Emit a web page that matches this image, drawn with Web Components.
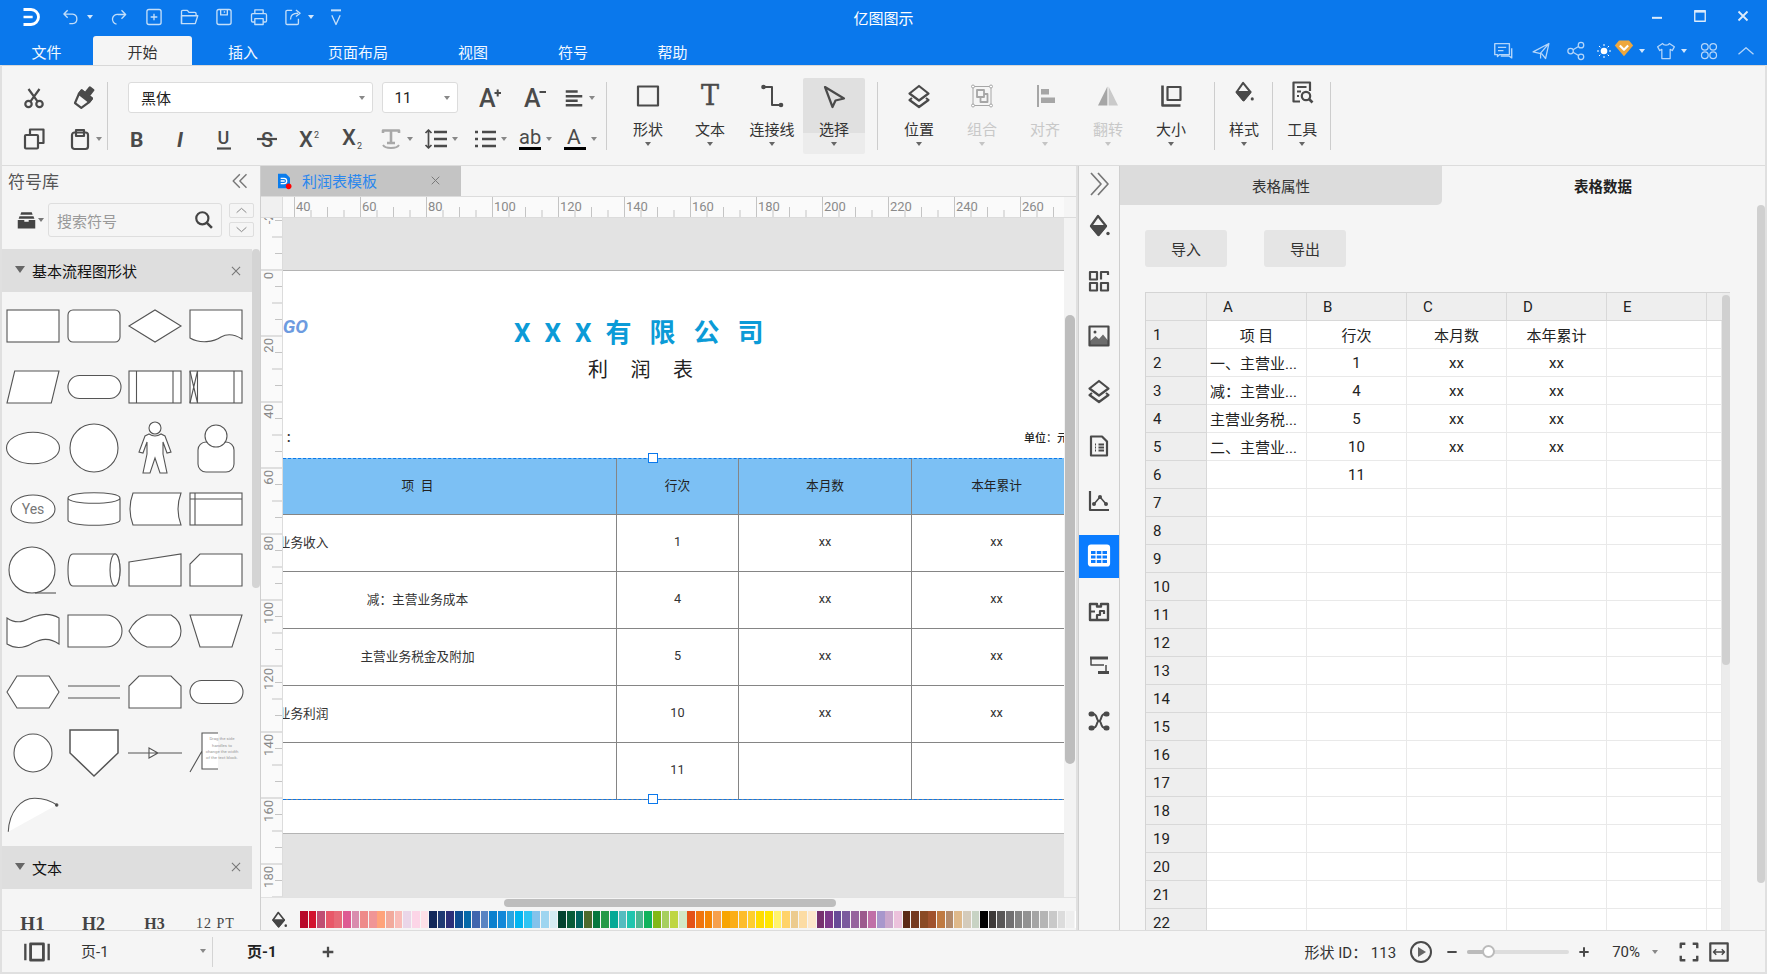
<!DOCTYPE html>
<html lang="zh">
<head>
<meta charset="utf-8">
<title>亿图图示</title>
<style>
html,body{margin:0;height:100%;overflow:hidden;background:#e0e0e0}
body{font-family:Roboto,"Noto Sans CJK SC",sans-serif;font-size:15px;color:#333}
</style>
</head>
<body>
<app-shell></app-shell>
<script>
(function () {
  const T = (s, x, y, size, extra) => `<text x="${x}" y="${y}" font-size="${size}" font-family="Roboto,sans-serif" fill="currentColor" stroke="none" ${extra || ""}>${s}</text>`;
  const ICONS = {
    logo: `<path d="M3 3H12A9 9 0 0 1 12 21H3" stroke-width="3.4"/><path d="M3 12H14" stroke-width="3"/>`,
    undo: `<path d="M8 4 3.5 8.5 8 13M3.5 8.5H14A5.8 5.8 0 0 1 14 20H10"/>`,
    redo: `<path d="M15 4 20 9 15 14M20 9H11A5.8 5.8 0 0 0 9 20.5"/>`,
    "new": `<rect x="3.5" y="3" width="17" height="18" rx="2.5"/><path d="M12 8v8M8 12h8"/>`,
    open: `<path d="M3 20V5.5A1.5 1.5 0 0 1 4.5 4H10l2 2.5h7A1.5 1.5 0 0 1 20.500 8v2"/><path d="M3 20h16.500L22.500 10.500H3z" fill="none"/>`,
    save: `<rect x="3.500" y="3" width="17" height="18" rx="2.500"/><path d="M8 3v6.500h8V3M12.500 5v2"/>`,
    print: `<path d="M7 8V3.500h10V8M7 18H4.500A1.500 1.500 0 0 1 3 16.500v-7A1.500 1.500 0 0 1 4.500 8h15A1.500 1.500 0 0 1 21 9.500v7a1.500 1.500 0 0 1-1.500 1.500H17"/><rect x="7" y="14" width="10" height="7"/>`,
    share: `<path d="M11 4H5a1.500 1.500 0 0 0-1.500 1.500v14A1.500 1.500 0 0 0 5 21h12a1.500 1.500 0 0 0 1.500-1.500V14"/><path d="M9 15c0-5 3-7.500 9-7.500M15.500 3.500l5 4-5 4"/>`,
    custom: `<path d="M6 4h12" stroke-width="2.400"/><path d="M7 10l5 11 5-11"/>`,
    min: `<path d="M6 13h12" stroke-width="2.400"/>`,
    max: `<rect x="5" y="5" width="14" height="14" stroke-width="1.800"/><path d="M5 6h14" stroke-width="3"/>`,
    close: `<path d="M6 6l12 12M18 6 6 18" stroke-width="2.400"/>`,
    comment: `<path d="M3 4h16v12H8l-2 2v-2H3z"/><path d="M6.500 8h9M6.500 11.500h6" stroke-width="1.400"/><path d="M21.500 9v10.500l-3-2H9.500"/>`,
    send: `<path d="M2.500 13 21.500 3 17.500 21 13 15.500 2.500 13zM21.500 3 11.500 14.500V21"/>`,
    nodes: `<circle cx="5.500" cy="12" r="3.300"/><circle cx="18" cy="5" r="3.300"/><circle cx="18" cy="19" r="3.300"/><path d="M8.500 10.500 15 6.500M8.500 13.500l6.500 4"/>`,
    sun: `<circle cx="12" cy="12" r="5" fill="#fff" stroke="none"/><path d="M12 1.500v3M12 19.500v3M1.500 12h3M19.500 12h3M4.500 4.500l2 2M17.500 17.500l2 2M4.500 19.500l2-2M17.500 6.500l2-2" stroke="#fff" stroke-width="1.500"/>`,
    gem: `<path d="M6 3h12l5 6-11 13L1 9z" fill="#eda73e" stroke="none"/><path d="M7 9l5 5 5-5" stroke="#fff" stroke-width="2.600"/>`,
    shirt: `<path d="M8 3C9 5.500 15 5.500 16 3l6 4-2.500 4.500-2.500-1.500v11H7V10L4.500 11.500 2 7z"/>`,
    clover: `<circle cx="7" cy="7" r="4"/><circle cx="17" cy="7" r="4"/><circle cx="7" cy="17" r="4"/><circle cx="17" cy="17" r="4"/>`,
    up: `<path d="M3 16l9-8 9 8"/>`,
    cut: `<circle cx="6.500" cy="18" r="3.200"/><circle cx="17.500" cy="18" r="3.200"/><path d="M8.500 15.300 17.500 3M15.500 15.300 6.500 3"/>`,
    brush: `<g transform="rotate(38 12 12)"><path d="M10 0h4.500v6H10z" fill="currentColor"/><path d="M5.500 7.500h13v4.500l-2.500 9.500H8L5.500 12z"/><path d="M5.500 7.500h13v4.500h-13z" fill="currentColor"/></g>`,
    copy: `<rect x="3" y="8" width="13" height="13.500" rx="1"/><path d="M8 8V2.500h13.500V16H16"/>`,
    paste: `<rect x="4" y="5.500" width="16" height="16.500" rx="2.500"/><path d="M8 9V3h8v6z"/>`,
    aplus: T("A", 1, 21, 25, 'font-weight="500"') + `<path d="M16.500 7h6.500M19.700 3.500v7" stroke-width="2"/>`,
    aminus: T("A", 1, 21, 25, 'font-weight="500"') + `<path d="M16.500 6h6.500" stroke-width="2"/>`,
    align: `<path d="M3 5h13M3 10h18M3 15h13M3 20h18" stroke-width="2.800"/>`,
    b: T("B", 5, 19.500, 21, 'font-weight="700"'),
    i: T("I", 8, 19.500, 21, 'font-weight="700" font-style="italic"'),
    u: T("U", 5.500, 17, 18, 'font-weight="500"') + `<path d="M5 21.500h14"/>`,
    s: T("S", 6, 19.500, 20, 'font-weight="500"') + `<path d="M2 12h20"/>`,
    sup: T("X", 1, 20, 22, 'font-weight="500"') + T("2", 16, 11, 9),
    sub: T("X", 1, 18, 22, 'font-weight="500"') + T("2", 16, 22, 9),
    ttext: `<path d="M4 6V3.500h16V6M12 3.500V16M8 16h8" stroke-width="2.600"/><path d="M4 18c2 4 14 4 16 0" stroke-width="1.800"/>`,
    spacing: `<path d="M10 5h13M10 12h13M10 19h13" stroke-width="2.600"/><path d="M4.500 3v18M1.500 6l3-3 3 3M1.500 18l3 3 3-3" stroke-width="1.700"/>`,
    list: `<path d="M9 5h14M9 12h14M9 19h14M2 5h3M2 12h3M2 19h3" stroke-width="2.600"/>`,
    ab: T("ab", 1, 17, 20, 'font-weight="400"') + `<rect x="1" y="20" width="22" height="3" fill="#000" stroke="none"/>`,
    acolor: T("A", 4, 17, 21, 'font-weight="400"') + `<rect x="1" y="20" width="22" height="3" fill="#000" stroke="none"/>`,
    square: `<rect x="2" y="2.500" width="20" height="19" stroke-width="2.200"/>`,
    textT: `<text x="12" y="21" text-anchor="middle" font-size="27" font-family="'DejaVu Serif',serif" font-weight="400" fill="currentColor" stroke="currentColor" stroke-width=".4">T</text>`,
    connector: `<circle cx="3.500" cy="3" r="2.300" fill="currentColor" stroke="none"/><circle cx="21" cy="21" r="2.300" fill="currentColor" stroke="none"/><path d="M3.500 3H12V21H21" stroke-width="2"/>`,
    pointer: `<path d="M3 3 22 14.500 13.500 16.500 10.500 23z"/>`,
    layers: `<path d="M12 2 21.500 9.500 12 16.500 2.500 9.500z"/><path d="M5 14 2.500 16 12 23 21.500 16 19 14"/>`,
    group: `<rect x="3" y="2.500" width="18" height="19" stroke-width="1"/><rect x="7" y="6" width="7" height="7" stroke-width="1.800"/><path d="M14 10h3.500v8H10.500v-5" stroke-width="1.800"/><g fill="#fff" stroke-width="1"><circle cx="3" cy="2.500" r="1.500"/><circle cx="21" cy="2.500" r="1.500"/><circle cx="3" cy="21.500" r="1.500"/><circle cx="21" cy="21.500" r="1.500"/></g>`,
    alignl: `<path d="M5 1v22" stroke-width="2"/><rect x="8" y="5" width="8" height="5.500" fill="currentColor" stroke="none"/><rect x="8" y="13.500" width="14" height="5.500" fill="currentColor" stroke="none"/>`,
    flip: `<path d="M11.400 2.500V21.500H2z" fill="currentColor" stroke="none"/><path d="M12.600 2.500V21.500H22z" fill="currentColor" opacity=".55" stroke="none"/>`,
    size: `<path d="M3.500 1.500V21.500H21.500" stroke-width="2.600"/><rect x="8.500" y="3" width="13" height="13" stroke-width="2.200"/>`,
    bucket: `<path d="M11 2 19 12l-7.500 9L4 12z" stroke-width="2.200"/><path d="M4 12h15l-7.500 9z" fill="currentColor"/><circle cx="21" cy="19.500" r="1.700" fill="currentColor" stroke="none"/>`,
    tools: `<path d="M20 11V2.500H3.500v19H10" stroke-width="2.200"/><path d="M7 7h9.500M7 11.500h4M7 16h2" stroke-width="1.800"/><circle cx="16" cy="16" r="4.200" stroke-width="2.200"/><path d="M19 19l3.500 3.500" stroke-width="2.600"/>`,
    chevs: `<path d="M13 4 5 12l8 8M21 4l-8 8 8 8" stroke-width="1.700"/>`,
    chevsr: `<path d="M4 1 14 12 4 23M11 1l10 11-10 11" stroke-width="1.700"/>`,
    tiles: `<rect x="3" y="3" width="7" height="7.500" stroke-width="2.200"/><path d="M14 10.500V3h7v3" stroke-width="2.200"/><rect x="14" y="14" width="7" height="7.500" stroke-width="2.200"/><rect x="3" y="14" width="7" height="7.500" stroke-width="2.200"/>`,
    image: `<rect x="2.500" y="2.500" width="19" height="19" stroke-width="2.200"/><circle cx="8" cy="8" r="1.500" fill="currentColor" stroke="none"/><path d="M3 17l5.500-5 3.500 3 4-4.500 5 6V21H3z" fill="currentColor" stroke="none" opacity=".8"/>`,
    doc: `<path d="M4 2.500h11l5 5v14H4z" stroke-width="2.200"/><path d="M8 10.500h1M8 13.500h1M8 16.500h1M11.500 10.500H17M11.500 13.500H17M11.500 16.500H17" stroke-width="1.800"/>`,
    chart: `<path d="M3 2v19h19" stroke-width="2.200"/><path d="M7 15l6-7 6 7" stroke-width="1.600"/><circle cx="7" cy="15" r="2" fill="currentColor" stroke="none"/><circle cx="13" cy="8" r="2" fill="currentColor" stroke="none"/><circle cx="19" cy="15" r="2" fill="currentColor" stroke="none"/>`,
    table: `<rect x="2" y="1.500" width="20" height="20" rx="2" fill="#fff" stroke="#fff"/><g fill="#0a7cff" stroke="none"><rect x="4" y="7" width="4.500" height="3"/><rect x="9.800" y="7" width="4.500" height="3"/><rect x="15.500" y="7" width="4.500" height="3"/><rect x="4" y="11.500" width="4.500" height="3"/><rect x="9.800" y="11.500" width="4.500" height="3"/><rect x="15.500" y="11.500" width="4.500" height="3"/><rect x="4" y="16" width="4.500" height="3"/><rect x="9.800" y="16" width="4.500" height="3"/><rect x="15.500" y="16" width="4.500" height="3"/></g>`,
    blocks: `<path d="M3 5h7v2.500h4V5h7v16H3z" stroke-width="2.400"/><path d="M3 12.500h5M10 21v-5h3V12h4v3" stroke-width="2.200"/>`,
    tree: `<path d="M3 4h18" stroke-width="3"/><path d="M4 4v7h13" stroke-width="1.500"/><rect x="11" y="17" width="11" height="3" fill="currentColor" stroke="none"/><path d="M19 11v6" stroke-width="1.500"/>`,
    mind: `<path d="M6 5c5 0 3 7 6 7s1-7 6-7M6 19c5 0 3-7 6-7s1 7 6 7" stroke-width="2"/><g fill="currentColor" stroke="none"><rect x="1.500" y="2.500" width="6" height="5" rx="2.500"/><rect x="16.500" y="2.500" width="6" height="5" rx="2.500"/><rect x="1.500" y="16.500" width="6" height="5" rx="2.500"/><rect x="16.500" y="16.500" width="6" height="5" rx="2.500"/></g>`,
    search: `<circle cx="10" cy="10" r="7.300" stroke-width="2.600"/><path d="M15.500 15.500l6 6" stroke-width="3"/>`,
    archive: `<path d="M6 2.500h12l1 3H5z" fill="currentColor" stroke="none"/><path d="M4 7h16l1 3H3z" fill="currentColor" stroke="none"/><path d="M2 11.500h7.500v2h5v-2H22V21H2z" fill="currentColor" stroke="none"/>`,
    pagefit: `<rect x="6.500" y="5" width="11" height="14" stroke-width="2.400"/><path d="M2 5v14M22 5v14" stroke-width="2"/>`,
    play: `<circle cx="12" cy="12" r="10" stroke-width="2"/><path d="M9 7l8 5-8 5z" fill="#666" stroke="none"/>`,
    plus: `<path d="M12 4v16M4 12h16" stroke-width="3.400"/>`,
    minus: `<path d="M4 12h16" stroke-width="3.400"/>`,
    frame: `<path d="M3 8V3h5M16 3h5v5M21 16v5h-5M8 21H3v-5" stroke-width="2.600"/>`,
    fit: `<rect x="2.500" y="2.500" width="19" height="19" stroke-width="2.400"/><path d="M6 12h12M9 9l-3 3 3 3M15 9l3 3-3 3" stroke-width="1.600"/>`,
    x: `<path d="M5 5l14 14M19 5 5 19" stroke-width="1.800"/>`,
    file: `<path d="M3 1h12l6 6v16H3z" fill="#0a7cec" stroke="none"/><path d="M7 8h5a4 4 0 0 1 0 8H7M7 12h6" stroke="#fff" stroke-width="2"/><circle cx="19" cy="20" r="4.200" fill="#f00" stroke="none"/>`
  };

  // base: renders css + markup into an open shadow root
  class Part extends HTMLElement {
    connectedCallback() {
      if (this.shadowRoot) return;
      this.attachShadow({ mode: "open" }).innerHTML =
        `<style>:host{display:block;box-sizing:border-box}*{box-sizing:border-box}${this.css()}</style>${this.html()}`;
    }
    css() { return ""; }
    html() { return "<slot></slot>"; }
    num(n, d) { return this.hasAttribute(n) ? Number(this.getAttribute(n)) : d; }
  }

  class UiIcon extends Part {
    css() {
      const s = this.num("s", 24);
      return `:host{display:inline-flex;flex:none;width:${s}px;height:${s}px}svg{width:100%;height:100%;overflow:visible}`;
    }
    html() {
      return `<svg viewBox="0 0 24 24" fill="none" stroke="currentColor" stroke-width="${this.num("sw", 2)}" stroke-linecap="butt" stroke-linejoin="round">${ICONS[this.getAttribute("name")] || ""}</svg>`;
    }
  }

  class UiCaret extends Part {
    css() {
      return `:host{display:inline-block;flex:none;width:0;height:0;border-left:3.500px solid transparent;border-right:3.500px solid transparent;border-top:4px solid var(--caret,#888)}`;
    }
    html() { return ""; }
  }

  class ToolItem extends Part {
    css() {
      const w = this.num("w", 24), pl = this.getAttribute("pl");
      return `:host{display:flex;flex:none;align-items:center;width:${w}px;margin-left:${this.num("ml", 0)}px;height:24px;
        justify-content:${pl === null ? "center" : "flex-start"};padding-left:${pl || 0}px;color:${this.hasAttribute("dim") ? "#a8a8a8" : "#4a4a4a"}}
        ui-caret{margin-left:4px}`;
    }
    html() {
      return `<ui-icon name="${this.getAttribute("icon")}" s="${this.num("s", 24)}" sw="${this.num("sw", 2.2)}"></ui-icon>${this.hasAttribute("caret") ? "<ui-caret></ui-caret>" : ""}`;
    }
  }

  class BigTool extends Part {
    css() {
      const on = this.hasAttribute("selected"), dim = this.hasAttribute("dim");
      return `:host{flex:none;width:${this.num("w", 62)}px;height:76px;display:flex;flex-direction:column;align-items:center;
        color:${dim ? "#c8c8c8" : "#333"};border-radius:2px;
        ${on ? "background:linear-gradient(#e0e0e0 72%,#ececec 72%);" : ""}}
        .ic{height:36px;display:flex;align-items:center;padding-bottom:${this.num("lift", 0)}px;color:${dim ? "#a6a6a6" : "#4a4a4a"}}
        .lb{margin-top:6px;height:20px;line-height:20px;font-size:15px;white-space:nowrap}
        ui-caret{margin-top:2px;--caret:${dim ? "#c4c4c4" : "#666"}}`;
    }
    html() {
      return `<div class="ic"><ui-icon name="${this.getAttribute("icon")}" s="${this.num("s", 24)}" sw="2.200"></ui-icon></div><div class="lb">${this.getAttribute("label")}</div><ui-caret></ui-caret>`;
    }
  }

  class TitleBar extends Part {
    css() {
      return `:host{background:#0a78ec;height:65px;color:#fff;margin:0 -2px;flex:none}
      .top{display:grid;grid-template-columns:1fr auto 1fr;height:36px;align-items:center;padding-bottom:2px}
      .qa{display:flex;align-items:center;color:#c3def9}
      .qa>*{margin-left:var(--m)}
      .ttl{font-size:15px;color:#fff}
      .win{display:flex;justify-content:flex-end;padding-right:3px;color:#dcebfb}
      .win span{width:43px;display:flex;justify-content:center}
      .tabs{display:flex;height:29px;align-items:stretch}
      .tab{display:flex;align-items:center;justify-content:center;font-size:15px;padding-top:1px;color:#f2f8ff}
      .tab.on{background:#f5f5f5;color:#333;border-radius:3px 3px 0 0}
      .rt{margin-left:auto;display:flex;align-items:center;padding-right:11px;color:#b5d6fa;--caret:#d3e6fb}
      .rt>*{margin-left:var(--m)}
      ui-caret{--caret:#d3e6fb}`;
    }
    html() {
      const q = [["logo", 21, 20, "#fff"], ["undo", 20], 0, ["redo", 16], ["new", 15], ["open", 15], ["save", 15], ["print", 15], ["share", 14], 1, ["custom", 12]];
      const qa = q.map(i => i === 0 ? `<ui-caret style="--m:6px"></ui-caret>` : i === 1 ? `<ui-caret style="--m:5px"></ui-caret>`
        : `<ui-icon name="${i[0]}" s="20" sw="${i[0] === "logo" ? 2 : 1.6}" style="--m:${i[1]}px;${i[3] ? "color:" + i[3] : ""}"></ui-icon>`).join("");
      const tabs = [["文件", 93], ["开始", 99, 1], ["插入", 102], ["页面布局", 128], ["视图", 102], ["符号", 98], ["帮助", 101]]
        .map(t => `<div class="tab${t[2] ? " on" : ""}" style="width:${t[1]}px">${t[0]}</div>`).join("");
      return `<div class="top"><div class="qa">${qa}</div><div class="ttl">亿图图示</div>
        <div class="win"><span><ui-icon name="min" s="20"></ui-icon></span><span><ui-icon name="max" s="18"></ui-icon></span><span><ui-icon name="close" s="18"></ui-icon></span></div></div>
        <div class="tabs">${tabs}<div class="rt">
          <ui-icon name="comment" s="22" sw="1.500"></ui-icon>
          <ui-icon name="send" s="20" sw="1.500" style="--m:17px"></ui-icon>
          <ui-icon name="nodes" s="20" sw="1.500" style="--m:15px"></ui-icon>
          <ui-icon name="sun" s="16" style="--m:10px"></ui-icon>
          <ui-icon name="gem" s="20" style="--m:2px;margin-top:-5px"></ui-icon>
          <ui-caret style="--m:5px"></ui-caret>
          <ui-icon name="shirt" s="20" sw="1.500" style="--m:11px"></ui-icon>
          <ui-caret style="--m:5px"></ui-caret>
          <ui-icon name="clover" s="20" sw="1.500" style="--m:12px"></ui-icon>
          <ui-icon name="up" s="20" sw="1.500" style="--m:17px"></ui-icon>
        </div></div>`;
    }
  }

  class FontSelect extends Part {
    css() {
      return `:host{flex:none;width:${this.num("w", 100)}px;height:31px;margin-left:${this.num("ml", 0)}px;background:#fff;border:1px solid #dcdcdc;border-radius:3px;
        display:flex;align-items:center;justify-content:space-between;padding:0 7px 0 12px;font-size:15px;color:#222}`;
    }
    html() { return `<span><slot></slot></span><ui-caret></ui-caret>`; }
  }

  class RibbonBar extends Part {
    css() {
      return `:host{height:100px;background:#f5f5f5;border-top:1px solid #d8d8d8;display:flex;flex:none}
      .sep{flex:none;width:1px;height:68px;background:#cdcdcd;margin-top:16px}
      .small{flex:none;padding-top:16px}
      .row{display:flex;align-items:center;height:31px}
      .row+.row{height:24px;margin-top:14px}
      .bigs{display:flex;padding-top:12px;flex:none}`;
    }
    html() {
      const big = (label, icon, w, extra) => `<big-tool label="${label}" icon="${icon}" w="${w}" ${extra || ""}></big-tool>`;
      return `<div class="small" style="width:105px">
        <div class="row"><tool-item icon="cut" ml="20"></tool-item><tool-item icon="brush" ml="26"></tool-item></div>
        <div class="row"><tool-item icon="copy" ml="20"></tool-item><tool-item icon="paste" ml="22" w="34" pl="0" caret></tool-item></div>
      </div><div class="sep"></div>
      <div class="small" style="width:498px;padding-left:7px">
        <div class="row"><font-select w="245" ml="13">黑体</font-select><font-select w="76.500" ml="8.500">11</font-select>
          <tool-item icon="aplus" ml="19.500"></tool-item><tool-item icon="aminus" ml="21"></tool-item><tool-item icon="align" ml="16" w="34" pl="0" caret s="22"></tool-item></div>
        <div class="row"><tool-item icon="b" w="44"></tool-item><tool-item icon="i" w="44"></tool-item><tool-item icon="u" w="42"></tool-item><tool-item icon="s" w="43"></tool-item><tool-item icon="sup" w="43"></tool-item><tool-item icon="sub" w="44"></tool-item>
          <tool-item icon="ttext" w="43" pl="4" caret dim></tool-item><tool-item icon="spacing" w="47" pl="6" caret></tool-item><tool-item icon="list" w="42" pl="8" caret></tool-item><tool-item icon="ab" w="45" pl="11" caret></tool-item><tool-item icon="acolor" w="40" pl="11" caret></tool-item></div>
      </div><div class="sep"></div>
      <div class="bigs" style="margin-left:10px">${big("形状", "square", 62)}${big("文本", "textT", 62)}${big("连接线", "connector", 62)}${big("选择", "pointer", 62, "selected")}</div>
      <div class="sep" style="margin-left:12px"></div>
      <div class="bigs" style="margin-left:9.500px">${big("位置", "layers", 63)}${big("组合", "group", 63, "dim")}${big("对齐", "alignl", 63, "dim")}${big("翻转", "flip", 63, "dim")}${big("大小", "size", 63)}</div>
      <div class="sep" style="margin-left:11px"></div>
      <div class="bigs" style="margin-left:1.500px">${big("样式", "bucket", 56, 'lift="8" s="22"')}</div><div class="sep"></div>
      <div class="bigs" style="margin-left:1.500px">${big("工具", "tools", 55.5, 'lift="8"')}</div><div class="sep"></div>`;
    }
  }

  const SHAPES = [
    `<rect x="4" y="14" width="52" height="32"/>`,
    `<rect x="4" y="14" width="52" height="32" rx="5"/>`,
    `<path d="M4 30 30 14 56 30 30 46z"/>`,
    `<path d="M4 14H56V43C48 38 42 37 35 41 28 46 14 48 4 42z"/>`,
    `<path d="M11.700 14H56L48.300 46H4z"/>`,
    `<rect x="4" y="18.500" width="53" height="23" rx="11.500"/>`,
    `<rect x="4" y="14" width="52" height="32"/><path d="M11.500 14V46M48 14V46"/>`,
    `<rect x="4" y="14" width="52" height="32"/><path d="M11.500 14V46M48 14V46M4 14 11.500 46M11.500 14 4 46"/>`,
    `<ellipse cx="30" cy="30" rx="26.500" ry="15.700"/>`,
    `<circle cx="30" cy="30" r="24"/>`,
    `<path d="M24 16 20 18 14 34 18 35 22 24V36L18 55H25L30 40 35 55H42L38 36V24L42 35 46 34 40 18 36 16Q30 20 24 16z"/><circle cx="30" cy="10" r="6"/>`,
    `<rect x="12" y="24" width="36" height="30" rx="8"/><circle cx="30" cy="18" r="11"/>`,
    `<ellipse cx="30" cy="30" rx="22" ry="14"/><text x="30" y="35" text-anchor="middle" font-size="14" font-family="Roboto,sans-serif" fill="#777" stroke="none">Yes</text>`,
    `<path d="M4 19V41C4 48 56 48 56 41V19C56 12 4 12 4 19zM4 19C4 26 56 26 56 19"/>`,
    `<path d="M8 14H56Q50 30 56 46H8Q2 30 8 14z"/>`,
    `<rect x="4" y="14" width="52" height="32"/><path d="M9 14V46M4 20H56"/>`,
    `<circle cx="29" cy="30" r="23"/><path d="M32 53H53"/>`,
    `<path d="M9 14H51A5 16 0 0 1 51 46H9Q4 46 4 30 4 14 9 14z"/><ellipse cx="51" cy="30" rx="5" ry="16"/>`,
    `<path d="M4 22 56 14V46H4z"/>`,
    `<path d="M14 14H56V46H4V24z"/>`,
    `<path d="M4 17C14 24 22 20 30 16 38 13 48 12 56 17V43C46 36 38 38 30 42 20 48 12 48 4 43z"/>`,
    `<path d="M4 14H42A16 16 0 0 1 42 46H4z"/>`,
    `<path d="M4 30Q10 18 22 14H46Q56 20 56 30 56 40 46 46H22Q10 42 4 30z"/>`,
    `<path d="M4 14H56L46 46H14z"/>`,
    `<path d="M4 30 14 14H46L56 30 46 46H14z"/>`,
    `<path d="M4 24H56M4 36H56"/>`,
    `<path d="M4 46V24L14 14H46L56 24V46z"/>`,
    `<rect x="4" y="18.500" width="53" height="23" rx="11.500"/>`,
    `<circle cx="30" cy="30" r="19"/>`,
    `<path d="M6 7H54V30L30 53 6 30z" stroke-width="1.500"/>`,
    `<path d="M3 30H57M24 25 33 30 24 35z"/>`,
    `<path d="M32 10H16V46H32M16 28 4 49"/><g font-size="4.300" font-family="Roboto,sans-serif" fill="#999" stroke="none" text-anchor="middle"><text x="36" y="17">Drag the side</text><text x="36" y="24">handles to</text><text x="36" y="30">change the width</text><text x="36" y="36">of the text block.</text></g>`,
    `<path d="M5.300 47.700C6 28 18 14 32 14.300 40 14.500 48 17 53.700 21"/><circle cx="53.700" cy="21" r="1.200" fill="#444"/>`
  ];

  class ShapeGrid extends Part {
    css() {
      return `:host{display:grid;grid-template-columns:repeat(4,61px);grid-auto-rows:61px;padding:3.400px 0 1.600px .500px}
      div{display:flex;align-items:center;justify-content:center}
      svg{width:60px;height:60px;overflow:visible}`;
    }
    html() {
      return SHAPES.map(s => `<div><svg viewBox="0 0 60 60" fill="#fff" stroke="#555" stroke-width="1.100">${s}</svg></div>`).join("");
    }
  }

  class SectionHead extends Part {
    css() {
      return `:host{height:43px;background:#dedede;display:flex;align-items:center;padding:0 6px 0 13px;font-size:15px;color:#111;flex:none}
      i{width:0;height:0;border-left:5px solid transparent;border-right:5px solid transparent;border-top:7px solid #666;margin:-2px 7px 0 0}
      span{flex:1}ui-icon{color:#777;margin-right:3px}`;
    }
    html() { return `<i></i><span><slot></slot></span><ui-icon name="x" s="14"></ui-icon>`; }
  }

  class SymbolPanel extends Part {
    css() {
      return `:host{flex:none;width:259px;height:100%;border-right:1px solid #cfcfcf;background:#f5f5f5;display:flex;flex-direction:column;overflow:hidden}
      .hd{height:34px;display:flex;align-items:center;padding:0 11px 5px 6px;font-size:17px;color:#555;justify-content:space-between;flex:none}
      .hd ui-icon{color:#777}
      .sr{height:34px;margin-top:3px;display:flex;flex:none}
      .drawer{flex:none;width:46px;padding-left:14px;display:flex;align-items:center;color:#444;--caret:#777}
      .drawer ui-caret{margin-left:1px}
      .box{flex:none;width:174px;border:1px solid #dedede;border-radius:3px;display:flex;align-items:center;justify-content:space-between;padding:0 7px 0 8px;color:#999;background:#f5f5f5}
      .box ui-icon{color:#444}
      .ud{flex:none;margin-left:7px;width:25px;display:flex;flex-direction:column;justify-content:space-between}
      .ud span{height:15px;border:1px solid #dedede;border-radius:2px;display:flex;align-items:center;justify-content:center;color:#777}
      .scroll{flex:1;min-height:0;margin-top:12px;display:flex}
      .list{flex:none;width:250px;overflow:hidden}
      .track{flex:none;width:8px}
      .thumb{height:339px;background:#d4d4d4;border-radius:4px}
      .txt{display:grid;grid-template-columns:repeat(4,61px);padding-top:28px;color:#444;text-align:center;font-family:"Liberation Serif",serif;align-items:end}
      .txt>*{line-height:14px}`;
    }
    html() {
      return `<div class="hd"><span>符号库</span><ui-icon name="chevs" s="20"></ui-icon></div>
      <div class="sr"><div class="drawer"><ui-icon name="archive" s="21"></ui-icon><ui-caret></ui-caret></div>
        <div class="box"><span>搜索符号</span><ui-icon name="search" s="20"></ui-icon></div>
        <div class="ud"><span><ui-icon name="up" s="13" sw="1.600"></ui-icon></span><span><ui-icon name="up" s="13" sw="1.600" style="transform:scaleY(-1)"></ui-icon></span></div></div>
      <div class="scroll"><div class="list"><section-head>基本流程图形状</section-head><shape-grid></shape-grid>
        <section-head>文本</section-head>
        <div class="txt"><b style="font-size:19px">H1</b><b style="font-size:18px">H2</b><b style="font-size:16px">H3</b><span style="font-size:14px;letter-spacing:1px">12 PT</span></div>
      </div><div class="track"><div class="thumb"></div></div></div>`;
    }
  }

  class HRuler extends Part {
    css() { return `:host{height:21px;display:flex;border-bottom:1px solid #dcdcdc;flex:none}.cn{flex:none;width:22px;background:#f0f0f0;border-right:1px solid #dcdcdc}
      .r{flex:none;width:781px;background:#fafafa;overflow:hidden}.e{flex:1;background:#f5f5f5}svg{display:block}`; }
    html() {
      let out = "";
      for (let n = 40; n <= 270; n += 5) {
        const x = (n - 40) * 3.3 + 11.5;
        if (x > 781) break;
        const h = n % 20 === 0 ? 20 : n % 10 === 0 ? 10 : 7;
        out += `<path d="M${x} ${20 - h}V20" stroke="#c4c4c4"/>`;
        if (n % 20 === 0) out += `<text x="${x + 1.5}" y="14" font-size="13" fill="#8a8a8a" font-family="Roboto,sans-serif">${n}</text>`;
      }
      return `<div class="cn"></div><div class="r"><svg width="781" height="20">${out}</svg></div><div class="e"></div>`;
    }
  }

  class VRuler extends Part {
    css() { return `:host{flex:none;width:22px;height:100%;background:#fafafa;border-right:1px solid #dcdcdc;overflow:hidden}svg{display:block}`; }
    html() {
      let out = "";
      for (let n = -20; n <= 200; n += 5) {
        const y = n * 3.3 + 52;
        const w = n % 20 === 0 ? 21 : n % 10 === 0 ? 10 : 7;
        out += `<path d="M${21 - w} ${y}H21" stroke="#c4c4c4"/>`;
        if (n % 20 === 0) out += `<text transform="translate(12 ${y + 2}) rotate(-90)" text-anchor="end" font-size="13" fill="#8a8a8a" font-family="Roboto,sans-serif">${n}</text>`;
      }
      return `<svg width="21" height="679">${out}</svg>`;
    }
  }

  // the report sheet that sits on the page
  class ReportTable extends Part {
    css() {
      return `:host{width:863px;margin-left:-64px;position:relative;font-size:12.700px;color:#333}
      .g{display:grid;grid-template-columns:398px 122px 173px 170px;grid-auto-rows:57px}
      .g>div{border-right:1px solid #858585;border-bottom:1px solid #858585;display:flex;align-items:center;justify-content:center;white-space:nowrap;padding-bottom:3px}
      .h{background:#7cc0f4;color:#222}
      .l{justify-content:flex-start!important;padding-left:8px}
      .sel{position:absolute;left:64px;right:0;height:0;border-top:1px dashed #0a78ec}
      .hd{position:absolute;left:428.500px;width:10px;height:10px;background:#fff;border:1.500px solid #0a78ec}`;
    }
    html() {
      const rows = [["一、主营业务收入", "1", "xx", "xx", 1], ["减：主营业务成本", "4", "xx", "xx"], ["主营业务税金及附加", "5", "xx", "xx"], ["二、主营业务利润", "10", "xx", "xx", 1], ["", "11", "", ""]];
      const head = ["项&ensp;目", "行次", "本月数", "本年累计"].map(t => `<div class="h">${t}</div>`).join("");
      const body = rows.map(r => `<div class="${r[4] ? "l" : ""}">${r[0]}</div><div>${r[1]}</div><div>${r[2]}</div><div>${r[3]}</div>`).join("");
      return `<div class="g">${head}${body}</div>
        <div class="sel" style="top:0"></div><div class="sel" style="top:341px"></div>
        <div class="hd" style="top:-5px"></div><div class="hd" style="top:336px"></div>`;
    }
  }

  class ReportPage extends Part {
    css() {
      return `:host{margin-top:52px;height:564px;background:#fff;border-top:1px solid #b4b4b4;border-bottom:1px solid #b4b4b4;position:relative;overflow:hidden}
      .t{position:absolute;white-space:nowrap}
      .logo{right:756px;top:44px;font:italic 700 19px Roboto,sans-serif;color:#6d9be0}
      .co{left:231px;top:44px;font-size:26px;font-weight:700;color:#0b9bd7;letter-spacing:18px;line-height:36px}
      .co span{letter-spacing:14px}
      .sub{left:305px;top:84px;font-size:20px;letter-spacing:22.500px;color:#222;line-height:30px}
      .a{left:3px;top:158px;font-size:11px;font-weight:700}
      .b{left:741px;top:158px;font-size:11px;color:#222;font-weight:500}
      report-table{position:absolute;top:187px;left:0}`;
    }
    html() {
      return `<div class="t logo">LOGO</div><div class="t co"><span>XXX</span>有限公司</div><div class="t sub">利润表</div>
        <div class="t a">：</div><div class="t b">单位：元</div><report-table></report-table>`;
    }
  }

  class ColorStrip extends Part {
    css() {
      return `:host{height:21px;display:flex;align-items:center;background:#f5f5f5;flex:none;overflow:hidden}
      .p{flex:none;width:39px;display:flex;justify-content:center;color:#444;padding-right:3px}
      i{flex:none;width:7.700px;height:17px;margin-right:.930px}`;
    }
    html() {
      const c = "#b8092a #d2122e #c04e72 #e85869 #e76a78 #de5b93 #d98dae #ee8a8a #f09596 #ffa37a #f2aa9c #f9bcb7 #ead6e8 #fcd5e7 #fde0e7 #12285a #1f3a73 #2c2f78 #0f4d92 #056aa9 #4166ae #5984c2 #0b80ce #1288d8 #2ca4e0 #00b5f1 #2dc4f3 #84c2eb #9ed5f0 #d6ecf2 #03432f #075b38 #00635d #4e6a2d #07783e #249946 #04a996 #53bcbf #20c5ad #4cb792 #0fb35c #83b817 #a6cf5f #bfd642 #d3e8c6 #e45216 #f0750d #f38505 #f6a04d #f8a501 #fbae17 #fdbd2b #fece2e #ffdc00 #ffe600 #fff36d #ffd369 #eccb8f #fcdca4 #fde8cc #77326f #7d3a8a #684a97 #7a5a9d #96649d #9c5a8d #c06fa7 #a897cc #cba7cc #ecc2dc #5d2a17 #74391e #8a4a24 #a0522d #bf7a42 #b38a6a #dfb98a #d4cbbb #c8d3c4 #000000 #3e3a39 #595757 #717071 #858585 #929292 #a5a5a5 #b5b5b5 #c9c9c9 #dcdcdc #eeeeee #ffffff".split(" ");
      return `<div class="p"><ui-icon name="bucket" s="18" sw="2"></ui-icon></div>${c.map(x => `<i style="background:${x}"></i>`).join("")}`;
    }
  }

  class DocArea extends Part {
    css() {
      return `:host{flex:none;width:815px;height:100%;display:flex;flex-direction:column;background:#f5f5f5}
      .tabs{height:31px;border-bottom:1px solid #dcdcdc;flex:none}
      .tab{width:200px;height:30px;background:#c4c4c4;display:flex;align-items:center;padding:0 19px 1px 15px;color:#2a87ee;font-size:15px}
      .tab span{flex:1;margin-left:10px}.tab ui-icon:last-child{color:#777}
      .mid{display:flex;height:679px;flex:none}
      .canvas{flex:none;width:781px;height:100%;background:#e3e3e3;overflow:hidden}
      .vs{flex:none;width:12px;padding:97px 0 0 1px;background:#f3f3f3}
      .vs div{width:10px;height:449px;background:#bdbdbd;border-radius:5px}
      .hs{height:12px;flex:none;background:#f5f5f5;border-top:1px solid #e2e2e2;padding:1px 0 0 243px}
      .hs div{width:332px;height:8px;background:#bdbdbd;border-radius:4px}`;
    }
    html() {
      return `<div class="tabs"><div class="tab"><ui-icon name="file" s="16"></ui-icon><span>利润表模板</span><ui-icon name="x" s="13" sw="1.400"></ui-icon></div></div>
      <h-ruler></h-ruler>
      <div class="mid"><v-ruler></v-ruler><div class="canvas"><report-page></report-page></div><div class="vs"><div></div></div></div>
      <div class="hs"><div></div></div><color-strip></color-strip>`;
    }
  }

  class IconRail extends Part {
    css() {
      return `:host{flex:none;width:42px;height:100%;margin-left:2px;border-left:1px solid #cfcfcf;border-right:1px solid #cfcfcf;background:#f5f5f5;color:#4a4a4a}
      .c{height:32px;display:flex;align-items:center;justify-content:center;padding-top:4px}
      .c ui-icon{color:#777}
      .i{height:55.100px;display:flex;align-items:center;justify-content:center}
      .i div{width:100%;height:43px;display:flex;align-items:center;justify-content:center}
      .i.on div{background:#0a7cff}`;
    }
    html() {
      const items = ["bucket", "tiles", "image", "layers", "doc", "chart", "table", "blocks", "tree", "mind"];
      return `<div class="c"><ui-icon name="chevsr" s="24"></ui-icon></div>` + items.map(n =>
        `<div class="i${n === "table" ? " on" : ""}"><div><ui-icon name="${n}" s="24" sw="2.200"></ui-icon></div></div>`).join("");
    }
  }

  class DataSheet extends Part {
    css() {
      return `:host{width:585px;flex:1;min-height:0;margin:25px 0 0 25px;display:flex;overflow:hidden;border-top:1px solid #d4d4d4;border-left:1px solid #d4d4d4;background:#fff}
      .g{flex:none;display:grid;grid-template-columns:61px repeat(5,100px) 15px;grid-auto-rows:28px;align-content:start;font-size:15px;color:#222}
      .g>div{border-right:1px solid #e9e9e9;border-bottom:1px solid #e9e9e9;display:flex;align-items:center;justify-content:center;white-space:nowrap;overflow:hidden}
      .g>.hh{background:#eee;justify-content:flex-start;padding-left:16px;border-color:#d8d8d8}
      .g>.rh{background:#eee;justify-content:flex-start;padding-left:7px;border-color:#d8d8d8}
      .g>.lf{justify-content:flex-start;padding-left:3px}
      .tr{flex:none;width:8px;background:#ececec}
      .tr div{height:370px;margin-top:2px;background:#d0d0d0;border-radius:4px}`;
    }
    html() {
      const data = { 1: ["项 目", "行次", "本月数", "本年累计"], 2: ["一、主营业...", "1", "xx", "xx"], 3: ["减：主营业...", "4", "xx", "xx"], 4: ["主营业务税...", "5", "xx", "xx"], 5: ["二、主营业...", "10", "xx", "xx"], 6: ["", "11", "", ""] };
      let h = `<div class="hh"></div>` + "ABCDE".split("").map(c => `<div class="hh">${c}</div>`).join("") + `<div class="hh"></div>`;
      for (let r = 1; r <= 22; r++) {
        const d = data[r] || ["", "", "", ""];
        h += `<div class="rh">${r}</div>`;
        d.forEach((v, i) => { h += `<div class="${i === 0 && r > 1 && r < 6 ? "lf" : ""}">${v}</div>`; });
        h += `<div></div><div></div>`;
      }
      return `<div class="g">${h}</div><div class="tr"><div></div></div>`;
    }
  }

  class PropPanel extends Part {
    css() {
      return `:host{flex:1;min-width:0;height:100%;background:#f5f5f5;display:flex}
      .m{flex:none;width:637px;height:100%;display:flex;flex-direction:column}
      .tabs{display:flex;height:39px;flex:none;font-size:14.500px}
      .tabs div{display:flex;align-items:center;justify-content:center;width:322px;flex:none}
      .tabs .off{background:#dcdcdc;border-radius:0 0 5px 0;color:#333}
      .tabs .act{font-weight:700;color:#222}
      .btns{display:flex;margin:25px 0 0 25px;flex:none}
      .btns div{width:82px;height:37px;background:#e5e5e5;border-radius:3px;display:flex;align-items:center;justify-content:center;font-size:15px;color:#333;margin-right:37px}
      .sb{flex:none;width:8px;margin-top:39px;height:678px;background:#d0d0d0;border-radius:4px}`;
    }
    html() {
      return `<div class="m"><div class="tabs"><div class="off">表格属性</div><div class="act">表格数据</div></div>
        <div class="btns"><div>导入</div><div>导出</div></div><data-sheet></data-sheet></div><div class="sb"></div>`;
    }
  }

  class StatusBar extends Part {
    css() {
      return `:host{height:42px;flex:none;background:#f5f5f5;border-top:1px solid #dcdcdc;display:flex;align-items:center;color:#333;font-size:15px}
      ui-icon{color:#4a4a4a}
      .name{flex:none;width:125px;margin-left:30px;display:flex;justify-content:space-between;align-items:center;color:#333;padding-bottom:2px}
      .sep{flex:none;width:1px;height:30px;background:#d4d4d4;margin-left:6px}
      .pg{font-weight:700;margin-left:34px;color:#222;padding-bottom:2px}
      .r{margin-left:auto;display:flex;align-items:center;padding-right:35px}
      .sl{position:relative;flex:none;width:102px;height:4px;background:#ddd;border-radius:2px;margin:0 8px}
      .sl i{position:absolute;left:0;top:0;height:4px;width:21px;background:#bbb;border-radius:2px}
      .sl b{position:absolute;left:15px;top:-5px;width:13px;height:13px;background:#fff;border:2px solid #bbb;border-radius:50%}`;
    }
    html() {
      return `<ui-icon name="pagefit" s="28" style="margin-left:21px"></ui-icon><div class="name"><span>页-1</span><ui-caret></ui-caret></div><div class="sep"></div>
      <span class="pg">页-1</span><ui-icon name="plus" s="16" style="margin-left:43px"></ui-icon>
      <div class="r"><span>形状 ID：&nbsp;113</span><ui-icon name="play" s="24" sw="2" style="margin-left:13px"></ui-icon>
        <ui-icon name="minus" s="14" style="margin-left:12px"></ui-icon><div class="sl"><i></i><b></b></div><ui-icon name="plus" s="14"></ui-icon>
        <span style="margin-left:21px">70%</span><ui-caret style="margin-left:12px"></ui-caret>
        <ui-icon name="frame" s="22" style="margin-left:20px"></ui-icon><ui-icon name="fit" s="22" style="margin-left:8px"></ui-icon></div>`;
    }
  }

  class AppShell extends Part {
    css() {
      return `:host{width:1767px;height:974px;padding:0 2px 2px;display:flex;flex-direction:column;background:#e0e0e0;overflow:hidden}
      .w{flex:none;height:765px;display:flex;border-top:1px solid #dcdcdc}`;
    }
    html() {
      return `<title-bar></title-bar><ribbon-bar></ribbon-bar><div class="w"><symbol-panel></symbol-panel><doc-area></doc-area><icon-rail></icon-rail><prop-panel></prop-panel></div><status-bar></status-bar>`;
    }
  }

  const tags = {
    "ui-icon": UiIcon, "ui-caret": UiCaret, "tool-item": ToolItem, "big-tool": BigTool, "title-bar": TitleBar,
    "font-select": FontSelect, "ribbon-bar": RibbonBar, "shape-grid": ShapeGrid, "section-head": SectionHead,
    "symbol-panel": SymbolPanel, "h-ruler": HRuler, "v-ruler": VRuler, "report-table": ReportTable, "report-page": ReportPage,
    "color-strip": ColorStrip, "doc-area": DocArea, "icon-rail": IconRail, "data-sheet": DataSheet, "prop-panel": PropPanel,
    "status-bar": StatusBar, "app-shell": AppShell
  };
  Object.keys(tags).forEach(t => customElements.define(t, tags[t]));
})();
</script>
</body>
</html>
